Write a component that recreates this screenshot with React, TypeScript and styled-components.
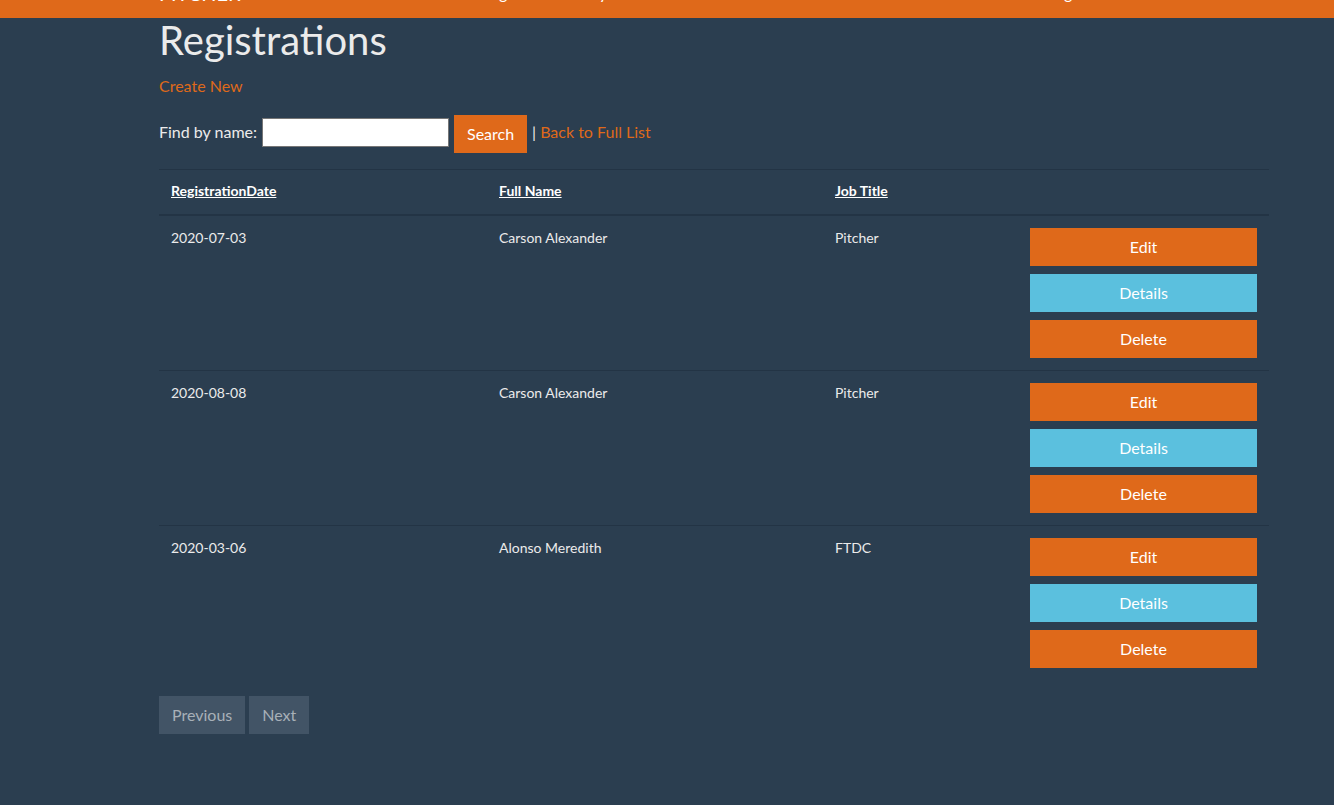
import React from "react";
import styled, { createGlobalStyle } from "styled-components";

const Global = createGlobalStyle`
  html, body { margin: 0; padding: 0; }
  body {
    background: #2b3e50;
    color: #ebebeb;
    font-family: Lato, "Open Sans", "Liberation Sans", sans-serif;
    font-size: 16px;
    line-height: 1.5;
  }
  * { box-sizing: border-box; }
`;

const Navbar = styled.nav`
  background: #df691a;
  height: 56px;
  margin-top: -38px;
  display: flex;
  align-items: center;
  padding-left: 159px;
  overflow: hidden;
`;

const Brand = styled.span`
  width: 90px;
  flex: none;
  font-size: 20px;
  line-height: 30px;
  color: #fff;
  position: relative;
  top: 3px;
`;

const NavLink = styled.span<{ $w: number }>`
  width: ${(p) => p.$w}px;
  flex: none;
  color: #fff;
  font-size: 16px;
  line-height: 24px;
  position: relative;
  top: 3px;
  white-space: nowrap;
`;

const Container = styled.main`
  width: 1110px;
  margin-left: 159px;
`;

const Title = styled.h1`
  font-size: 40px;
  line-height: 48px;
  font-weight: 400;
  margin: -2px 0 10px;
  color: #ebebeb;
`;

const Link = styled.a`
  color: #df691a;
  text-decoration: none;
  cursor: pointer;
`;

const Para = styled.p`
  margin: 0 0 14px;
`;

const SearchRow = styled.form`
  display: flex;
  align-items: flex-start;
  padding-top: 3px;
  margin: 0 0 16px;
  white-space: pre;
`;

const Label = styled.span`
  margin-top: 5px;
`;

const TextInput = styled.input`
  width: 187px;
  height: 29px;
  margin: 3px 0 0 5px;
  border: 1px solid #767676;
  background: #fff;
  padding: 1px 2px;
  font: inherit;
`;

const Button = styled.button<{ $variant: "primary" | "info" | "muted"; $block?: boolean }>`
  display: ${(p) => (p.$block ? "block" : "inline-block")};
  width: ${(p) => (p.$block ? "100%" : "auto")};
  height: 38px;
  padding: 6px 12px;
  border: 1px solid transparent;
  border-radius: 0;
  font-family: inherit;
  font-size: 16px;
  line-height: 24px;
  color: ${(p) => (p.$variant === "muted" ? "#a8b0b8" : "#fff")};
  background: ${(p) =>
    p.$variant === "primary" ? "#df691a" : p.$variant === "info" ? "#5bc0de" : "#425466"};
  cursor: pointer;
`;

const SearchButton = styled(Button)`
  margin-left: 5px;
  width: 73px;
`;

const Tail = styled.span`
  margin: 5px 0 0 5px;
`;

const Table = styled.table`
  width: 1110px;
  border-collapse: collapse;
  margin-bottom: 16px;
  font-size: 14px;
  line-height: 20px;
`;

const Th = styled.th<{ $w: number }>`
  width: ${(p) => p.$w}px;
  text-align: left;
  vertical-align: bottom;
  padding: 11px 12px 13px;
  border-top: 1px solid #233445;
  border-bottom: 2px solid #233445;
  font-weight: 700;
`;

const HeadLink = styled.a`
  color: #fff;
  text-decoration: underline;
`;

const Td = styled.td`
  padding: 12px;
  vertical-align: top;
  border-top: 1px solid #233445;
  color: #ebebeb;
`;

const Actions = styled.div`
  display: flex;
  flex-direction: column;
  gap: 8px;
`;

const Pager = styled.div`
  display: flex;
  gap: 4px;
`;

const rows = [
  { date: "2020-07-03", name: "Carson Alexander", job: "Pitcher" },
  { date: "2020-08-08", name: "Carson Alexander", job: "Pitcher" },
  { date: "2020-03-06", name: "Alonso Meredith", job: "FTDC" },
];

export default function App() {
  return (
    <>
      <Global />
      <Navbar>
        <Brand>PITCHER</Brand>
        <NavLink $w={232}>Home</NavLink>
        <NavLink $w={97}>Registrations</NavLink>
        <NavLink $w={468}>Players</NavLink>
        <NavLink $w={80}>Register</NavLink>
      </Navbar>
      <Container>
        <Title>Registrations</Title>
        <Para>
          <Link>Create New</Link>
        </Para>
        <SearchRow onSubmit={(e) => e.preventDefault()}>
          <Label>Find by name:</Label>
          <TextInput type="text" />
          <SearchButton type="submit" $variant="primary">
            Search
          </SearchButton>
          <Tail>
            | <Link>Back to Full List</Link>
          </Tail>
        </SearchRow>
        <Table>
          <thead>
            <tr>
              <Th $w={328}>
                <HeadLink>RegistrationDate</HeadLink>
              </Th>
              <Th $w={336}>
                <HeadLink>Full Name</HeadLink>
              </Th>
              <Th $w={195}>
                <HeadLink>Job Title</HeadLink>
              </Th>
              <Th $w={251}></Th>
            </tr>
          </thead>
          <tbody>
            {rows.map((r, i) => (
              <tr key={i}>
                <Td>{r.date}</Td>
                <Td>{r.name}</Td>
                <Td>{r.job}</Td>
                <Td>
                  <Actions>
                    <Button $variant="primary" $block>
                      Edit
                    </Button>
                    <Button $variant="info" $block>
                      Details
                    </Button>
                    <Button $variant="primary" $block>
                      Delete
                    </Button>
                  </Actions>
                </Td>
              </tr>
            ))}
          </tbody>
        </Table>
        <Pager>
          <Button $variant="muted">Previous</Button>
          <Button $variant="muted">Next</Button>
        </Pager>
      </Container>
    </>
  );
}
